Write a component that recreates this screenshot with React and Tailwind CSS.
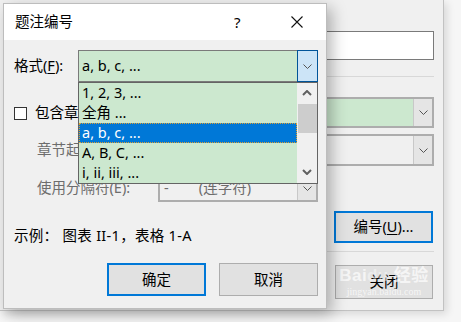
import React from "react";

const font = "font-['Noto_Sans','Noto_Sans_CJK_SC',sans-serif]";

function Chevron({ className = "" }) {
    return (
        <svg width="9" height="5" viewBox="0 0 9 5" className={className}>
            <path d="M0.5 0.5 L4.5 4.5 L8.5 0.5" fill="none" stroke="#555" strokeWidth="1" />
        </svg>
    );
}

function ScrollArrow({ up }) {
    return (
        <svg width="10" height="6" viewBox="0 0 10 6">
            <path d={up ? "M1 5 L5 1 L9 5" : "M1 1 L5 5 L9 1"} fill="none" stroke="#606060" strokeWidth="2" />
        </svg>
    );
}

// Select box used in both dialogs
function Combo({ className = "", green, text }) {
    return (
        <div className={`flex border-2 border-[#adadad] ${green ? "bg-[#cce8cf]" : "bg-[#f0f0f0]"} ${className}`}>
            <div className="flex-1 flex items-center pl-[4px] text-[#6d6d6d] whitespace-pre">{text}</div>
            <div className="w-[19px] bg-[#e5e5e5] border-l border-[#c8c8c8] flex items-center justify-center">
                <Chevron />
            </div>
        </div>
    );
}

export default function App() {

    const rows = ["1, 2, 3, ...", "全角 ...", "a, b, c, ...", "A, B, C, ...", "i, ii, iii, ..."];

    return (
        <div className={`relative w-[461px] h-[322px] overflow-hidden bg-[#f6f6f6] text-[14.5px] text-black ${font}`}>

            {/* Back dialog */}
            <div className="absolute left-0 top-0 w-[444px] h-[311px] bg-[#f0f0f0] border-r border-b border-[#c2c2c2] shadow-[3px_3px_8px_rgba(0,0,0,0.12)] flex flex-col items-end pr-[9px]">
                <div className="mt-[31px] w-[150px] h-[29px] bg-white border border-[#7a7a7a]" />
                <div className="mt-[16px] w-[150px] h-px bg-[#d8d8d8]" />
                <Combo green className="mt-[20px] w-[150px] h-[31px]" />
                <Combo className="mt-[6px] w-[150px] h-[32px]" />
                <button type="button" className="mt-[45px] mr-px w-[99px] h-[32px] bg-[#e1e1e1] border-2 border-[#0078d7] flex items-center justify-center">
                    编号(<span className="underline underline-offset-2">U</span>)...
                </button>
                <div className="mt-[8px] w-[108px] h-px bg-[#d8d8d8]" />
                <div className="relative mt-[13px] mr-px w-[98px] h-[34px] bg-[#e1e1e1] border border-[#adadad] flex items-center justify-center">
                    关闭
                    {/* watermark */}
                    <div className="absolute inset-0 flex flex-col items-center justify-center text-white/70 leading-none">
                        <div className="text-[17px] font-bold tracking-wide font-['Liberation_Sans','Noto_Sans_CJK_SC',sans-serif]">Bai<span className="opacity-60">du</span> 经验</div>
                        <div className="text-[10px] mt-[3px] font-['Liberation_Serif',serif]">jingyan.baidu.com</div>
                    </div>
                </div>
            </div>

            {/* Front dialog */}
            <div className="absolute left-[3px] top-[3px] w-[324px] h-[306px] bg-[#f0f0f0] border border-[#bdbdbd] shadow-[5px_5px_14px_rgba(0,0,0,0.28)] flex flex-col">

                {/* Title bar */}
                <div className="h-[36px] bg-white flex items-center pl-[11px]">
                    <span className="flex-1">题注编号</span>
                    <span className="w-[12px] text-[15px] font-['Noto_Sans',sans-serif]">?</span>
                    <svg width="12" height="12" viewBox="0 0 12 12" className="ml-[45px] mr-[23px]">
                        <path d="M0.5 0.5 L11.5 11.5 M11.5 0.5 L0.5 11.5" stroke="#111" strokeWidth="1.1" />
                    </svg>
                </div>

                <div className="flex-1 flex flex-col pl-[10px] pr-[8px]">

                    {/* Format */}
                    <div className="mt-[10px] flex items-center">
                        <span className="w-[64px]">格式(<span className="underline underline-offset-2">F</span>):</span>
                        <div className="relative w-[240px] h-[32px] bg-[#cce8cf] border border-[#7a7a7a] flex">
                            <div className="flex-1 flex items-center pl-[3px]">a, b, c, ...</div>
                            <div className="w-[21px] -m-px bg-[#cce4f7] border border-[#005499] flex items-center justify-center">
                                <Chevron />
                            </div>

                            {/* Open list */}
                            <div className="absolute left-[-1px] top-[31px] w-[240px] h-[102px] bg-[#cce8cf] border border-[#646464] flex overflow-hidden z-10">
                                <div className="flex-1 flex flex-col">
                                    {rows.map((r, i) => (
                                        <div key={r} className={`h-[20px] shrink-0 flex items-center pl-[3px] ${i == 2 ? "bg-[#0078d7] text-white outline-1 outline-dotted outline-[#e0a030] -outline-offset-1" : ""}`}>{r}</div>
                                    ))}
                                </div>
                                <div className="w-[20px] bg-[#f0f0f0] flex flex-col items-center">
                                    <div className="h-[20px] flex items-center justify-center"><ScrollArrow up /></div>
                                    <div className="mt-px w-[19px] h-[29px] bg-[#cdcdcd]" />
                                    <div className="flex-1" />
                                    <div className="h-[22px] flex items-center justify-center"><ScrollArrow /></div>
                                </div>
                            </div>
                        </div>
                    </div>

                    {/* Include chapter */}
                    <div className="mt-[21px] h-[20px] flex items-center">
                        <div className="w-[13px] h-[13px] border border-[#333] bg-white" />
                        <span className="ml-[8px]">包含章节号</span>
                    </div>

                    {/* Chapter start style */}
                    <div className="mt-[14px] h-[26px] flex items-center text-[#6d6d6d]">
                        <span className="ml-[23px] w-[121px]">章节起始样式</span>
                        <Combo className="w-[160px] h-[26px]" text="标题 1" />
                    </div>

                    {/* Separator */}
                    <div className="mt-[12px] h-[26px] flex items-center text-[#6d6d6d]">
                        <span className="ml-[23px] w-[121px]">使用分隔符(E):</span>
                        <Combo className="w-[160px] h-[27px]" text={"-        (连字符)"} />
                    </div>

                    {/* Example */}
                    <div className="mt-[25px] h-[20px] flex items-center tracking-[0.3px]">
                        示例：&nbsp;图表 II-1，表格 1-A
                    </div>

                    {/* Buttons */}
                    <div className="mt-[17px] flex justify-end gap-[13px]">
                        <button type="button" className="w-[99px] h-[33px] bg-[#e1e1e1] border-2 border-[#0078d7] flex items-center justify-center">确定</button>
                        <button type="button" className="w-[99px] h-[33px] bg-[#e1e1e1] border border-[#adadad] flex items-center justify-center">取消</button>
                    </div>
                </div>
            </div>
        </div>
    );
}
